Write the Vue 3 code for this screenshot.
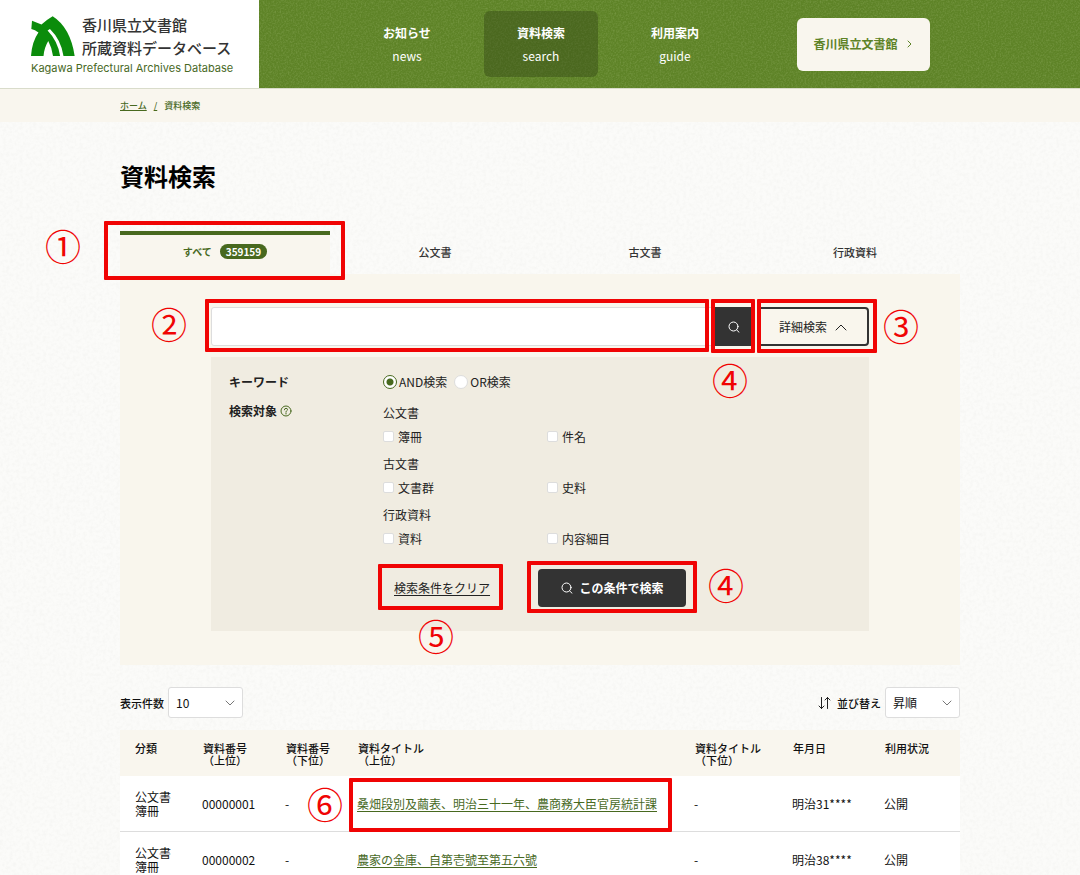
<script setup>
import { ref } from 'vue'

const navItems = [
  { ja: 'お知らせ', en: 'news', active: false },
  { ja: '資料検索', en: 'search', active: true },
  { ja: '利用案内', en: 'guide', active: false },
]

const tabs = [
  { label: 'すべて', count: '359159', active: true },
  { label: '公文書' },
  { label: '古文書' },
  { label: '行政資料' },
]

const groups = [
  { title: '公文書', options: ['簿冊', '件名'] },
  { title: '古文書', options: ['文書群', '史料'] },
  { title: '行政資料', options: ['資料', '内容細目'] },
]

const columns = [
  { key: 'kind', lines: ['分類'] },
  { key: 'upper', lines: ['資料番号', '（上位）'] },
  { key: 'lower', lines: ['資料番号', '（下位）'] },
  { key: 'title', lines: ['資料タイトル', '（上位）'] },
  { key: 'sub', lines: ['資料タイトル', '（下位）'] },
  { key: 'date', lines: ['年月日'] },
  { key: 'state', lines: ['利用状況'] },
]

const rows = [
  { id: '00000001', title: '桑畑段別及繭表、明治三十一年、農商務大臣官房統計課', date: '明治31****', note: '⑥' },
  { id: '00000002', title: '農家の金庫、自第壱號至第五六號', date: '明治38****' },
]

const keyword = ref('')
const mode = ref('and')
const perPage = ref('10')
const order = ref('asc')
</script>

<template>
  <div class="page">
    <svg class="grain" aria-hidden="true">
      <filter id="paper">
        <feTurbulence type="fractalNoise" baseFrequency="0.3" numOctaves="3" seed="4" />
        <feColorMatrix values="0 0 0 0 0.4  0 0 0 0 0.4  0 0 0 0 0.36  0.13 0 0 0 -0.05" />
      </filter>
      <rect width="100%" height="100%" filter="url(#paper)" />
    </svg>

    <header class="header">
      <svg class="grain" aria-hidden="true">
        <filter id="felt">
          <feTurbulence type="fractalNoise" baseFrequency="0.6" numOctaves="2" seed="9" />
          <feColorMatrix values="0 0 0 0 0.85  0 0 0 0 0.95  0 0 0 0 0.6  0.3 0 0 0 -0.12" />
        </filter>
        <rect width="100%" height="100%" filter="url(#felt)" />
      </svg>
      <a class="brand" href="#">
        <span class="brand-row">
          <svg class="logo" viewBox="95 48 130 118" aria-hidden="true">
            <path fill="#0b8c0b" d="M98 62 L126 73 Q142 59 159 49 Q211 82 224 166 L191 166 Q184 118 151 86 L144 91 Q174 122 181 166 L160 166 Q156 140 146 122 Q134 142 132 166 L95 166 Q98 124 117 97 Q107 88 96 86 Z" />
          </svg>
          <span class="brand-name">香川県立文書館<br />所蔵資料データベース</span>
        </span>
        <span class="brand-en">Kagawa Prefectural Archives Database</span>
      </a>
      <nav class="nav">
        <a v-for="n in navItems" :key="n.en" href="#" class="nav-item" :class="{ active: n.active }">
          <b>{{ n.ja }}</b><span>{{ n.en }}</span>
        </a>
      </nav>
      <a class="site-link" href="#">
        香川県立文書館
        <svg viewBox="0 0 8 8" aria-hidden="true"><path d="M2 1 L5 4 L2 7" /></svg>
      </a>
    </header>

    <div class="crumbs">
      <div class="container">
        <a href="#">ホーム</a><a class="slash" href="#">/</a><span>資料検索</span>
      </div>
    </div>

    <main class="container">
      <h1>資料検索</h1>

      <div class="tabs">
        <button v-for="t in tabs" :key="t.label" type="button" class="tab" :class="{ active: t.active }">
          {{ t.label }}<span v-if="t.count" class="badge">{{ t.count }}</span>
        </button>
        <div class="frame frame-tab"></div>
        <span class="num num-1">①</span>
      </div>

      <form class="search" @submit.prevent>
        <div class="search-row">
          <div class="cell cell-input">
            <input v-model="keyword" type="text" class="keyword" aria-label="キーワード" />
            <div class="frame frame-input"></div>
            <span class="num num-2">②</span>
          </div>
          <div class="cell">
            <button type="submit" class="go" aria-label="検索">
              <svg class="glass" viewBox="0 0 12 12" aria-hidden="true"><circle cx="5.5" cy="5.5" r="4.5" /><path d="M8.5 8.8 L11 11.2" /></svg>
            </button>
            <div class="frame frame-go"></div>
            <span class="num num-4">④</span>
          </div>
          <div class="cell cell-detail">
            <button type="button" class="detail">
              詳細検索
              <svg viewBox="0 0 12 8" aria-hidden="true"><path d="M1 7 L6 2 L11 7" /></svg>
            </button>
            <div class="frame frame-detail"></div>
            <span class="num num-3">③</span>
          </div>
        </div>

        <div class="conditions">
          <div class="cond-label">キーワード</div>
          <div class="radios">
            <label><input v-model="mode" type="radio" name="mode" value="and" />AND検索</label>
            <label><input v-model="mode" type="radio" name="mode" value="or" />OR検索</label>
          </div>
          <div class="cond-label">
            検索対象
            <svg class="help" viewBox="0 0 12 12" aria-hidden="true">
              <circle cx="6" cy="6" r="5" />
              <path d="M4.4 4.8 Q4.5 3.3 6 3.3 Q7.6 3.4 7.5 4.7 Q7.4 5.5 6.5 6 Q6 6.3 6 7.1 M6 8.2 V9" />
            </svg>
          </div>
          <div>
            <div v-for="g in groups" :key="g.title" class="group">
              <div class="group-title">{{ g.title }}</div>
              <div class="checks">
                <label v-for="o in g.options" :key="o"><input type="checkbox" />{{ o }}</label>
              </div>
            </div>
          </div>
          <div class="actions">
            <div class="cell">
              <button type="reset" class="clear">検索条件をクリア</button>
              <div class="frame frame-clear"></div>
              <span class="num num-5">⑤</span>
            </div>
            <div class="cell">
              <button type="submit" class="submit">
                <svg class="glass" viewBox="0 0 12 12" aria-hidden="true"><circle cx="5.5" cy="5.5" r="4.5" /><path d="M8.5 8.8 L11 11.2" /></svg>
                この条件で検索
              </button>
              <div class="frame frame-submit"></div>
              <span class="num num-4b">④</span>
            </div>
          </div>
        </div>
      </form>

      <div class="toolbar">
        <label for="per">表示件数</label>
        <span class="select">
          <select id="per" v-model="perPage"><option>10</option><option>20</option><option>50</option></select>
          <svg viewBox="0 0 10 8" aria-hidden="true"><path d="M1 2 L5 6 L9 2" /></svg>
        </span>
        <svg class="sort" viewBox="0 0 13 12" aria-hidden="true"><path d="M3.5 0.5 V11.5 M1 9 L3.5 11.5 M9.5 11.5 V0.5 M9.5 0.5 L12 3 M3.5 11.5 L6 9 M7 3 L9.5 0.5" /></svg>
        <label for="order">並び替え</label>
        <span class="select">
          <select id="order" v-model="order"><option value="asc">昇順</option><option value="desc">降順</option></select>
          <svg viewBox="0 0 10 8" aria-hidden="true"><path d="M1 2 L5 6 L9 2" /></svg>
        </span>
      </div>

      <table>
        <colgroup><col v-for="c in columns" :key="c.key" :class="'col-' + c.key" /></colgroup>
        <thead>
          <tr>
            <th v-for="c in columns" :key="c.key" scope="col">
              <template v-for="(l, i) in c.lines" :key="l"><br v-if="i" />{{ l }}</template>
            </th>
          </tr>
        </thead>
        <tbody>
          <tr v-for="r in rows" :key="r.id">
            <td>公文書<br />簿冊</td>
            <td>{{ r.id }}</td>
            <td>-</td>
            <td>
              <span class="cell title">
                <a href="#">{{ r.title }}</a>
                <template v-if="r.note">
                  <span class="frame frame-title"></span>
                  <span class="num num-6">{{ r.note }}</span>
                </template>
              </span>
            </td>
            <td>-</td>
            <td>{{ r.date }}</td>
            <td>公開</td>
          </tr>
        </tbody>
      </table>
    </main>
  </div>
</template>

<style>
body {
  background: #fafaf8;
}
</style>

<style scoped>
* {
  box-sizing: border-box;
}
.page {
  position: relative;
  height: 100vh;
  overflow: hidden;
  background: #fbfbf9;
  color: #111;
  font: 12px/16px "Noto Sans CJK JP", sans-serif;
}
button, input, select {
  font: inherit;
  color: inherit;
  margin: 0;
}
button {
  cursor: pointer;
  padding: 0;
}
svg path, svg circle {
  stroke-linecap: round;
  stroke-linejoin: round;
}
.grain {
  position: absolute;
  inset: 0;
  width: 100%;
  height: 100%;
}
.container {
  position: relative;
  width: calc(100% - 240px);
  max-width: 840px;
  margin: 0 auto;
}

/* header */
.header {
  position: relative;
  display: flex;
  align-items: center;
  height: 88px;
  background: #5e8327;
}
.brand {
  position: relative;
  width: 259px;
  height: 88px;
  padding: 13px 0 0 31px;
  background: #fff;
  text-decoration: none;
  color: #333;
}
.brand-row {
  display: flex;
  gap: 7px;
}
.logo {
  width: 44px;
  height: 40px;
  margin-top: 3px;
}
.brand-name {
  font-size: 15px;
  font-weight: 500;
  line-height: 23px;
  white-space: nowrap;
}
.brand-en {
  display: block;
  margin-top: 1px;
  font: 11px/16px Inter, sans-serif;
  color: #48691f;
  white-space: nowrap;
}
.nav {
  position: relative;
  display: flex;
  gap: 20px;
  margin-left: 91px;
}
.nav-item {
  display: flex;
  flex-direction: column;
  align-items: center;
  justify-content: center;
  gap: 7px;
  width: 114px;
  height: 66px;
  border-radius: 6px;
  color: #fff;
  text-decoration: none;
}
.nav-item.active {
  background: rgba(48, 64, 20, 0.4);
}
.site-link {
  position: relative;
  display: flex;
  align-items: center;
  justify-content: center;
  gap: 8px;
  width: 133px;
  height: 53px;
  margin-left: 65px;
  border-radius: 6px;
  background: #f9f6ee;
  color: #5e8327;
  font-weight: 700;
  text-decoration: none;
}
.site-link svg {
  width: 8px;
  height: 8px;
  fill: none;
  stroke: #5e8327;
}

/* breadcrumb */
.crumbs {
  position: relative;
  height: 34px;
  border-top: 1px solid #d9dccb;
  background: #f9f6ee;
  color: #48691f;
  font-size: 9px;
  font-weight: 500;
  line-height: 33px;
}
.crumbs a {
  color: inherit;
}
.crumbs .slash {
  margin: 0 7px;
}

/* title and tabs */
h1 {
  margin: 36px 0 38px;
  font-size: 24px;
  line-height: 35px;
  color: #000;
}
.tabs {
  position: relative;
  display: grid;
  grid-template-columns: repeat(4, 1fr);
  height: 43px;
}
.tab {
  padding-bottom: 6px;
  border: 0;
  border-top: 4px solid transparent;
  background: none;
  font-size: 11px;
  font-weight: 500;
  color: #333;
}
.tab.active {
  border-color: #48691f;
  background: #f9f6ee;
  color: #48691f;
  font-size: 10px;
  font-weight: 700;
}
.badge {
  display: inline-block;
  margin-left: 8px;
  padding: 0 6px;
  border-radius: 8px;
  background: #48691f;
  color: #fff;
  font-size: 10px;
  line-height: 15px;
}

/* search panel */
.search {
  padding: 33px 91px 34px;
  background: #f9f6ed;
}
.search-row {
  display: flex;
}
.cell {
  position: relative;
}
.cell-input {
  flex: 1;
}
.keyword {
  width: 100%;
  height: 39px;
  padding: 0 12px;
  border: 1px solid #ddd;
  border-radius: 3px 0 0 3px;
  background: #fff;
}
.go {
  display: flex;
  align-items: center;
  justify-content: center;
  width: 41px;
  height: 39px;
  border: 0;
  border-radius: 0 3px 3px 0;
  background: #333;
}
.glass {
  width: 12px;
  height: 12px;
  fill: none;
  stroke: #fff;
}
.cell-detail {
  margin-left: 3px;
}
.detail {
  display: flex;
  align-items: center;
  justify-content: center;
  gap: 8px;
  width: 112px;
  height: 39px;
  border: 2px solid #333;
  border-radius: 4px;
  background: #f9f6ed;
  color: #222;
}
.detail svg {
  width: 12px;
  height: 8px;
  fill: none;
  stroke: #222;
}
.conditions {
  display: grid;
  grid-template-columns: 154px 1fr;
  margin-top: 11px;
  padding: 15px 18px 24px;
  background: #f0ece1;
  color: #222;
}
.cond-label {
  display: flex;
  align-items: center;
  gap: 3px;
  height: 20px;
  font-weight: 700;
  line-height: 20px;
}
.conditions > .cond-label:nth-child(3) {
  margin-top: 9px;
}
.help {
  width: 12px;
  height: 12px;
  fill: none;
  stroke: #48691f;
}
.radios {
  display: flex;
  gap: 7px;
}
.radios label {
  display: flex;
  align-items: center;
  gap: 2px;
  height: 20px;
}
.radios input {
  appearance: none;
  width: 14px;
  height: 14px;
  border: 1px solid #ddd;
  border-radius: 50%;
  background: #fff;
}
.radios input:checked {
  border-color: #48691f;
  background: radial-gradient(circle, #48691f 3px, #fff 4px);
}
.group {
  padding-top: 11px;
  margin-bottom: -1px;
}
.group-title {
  line-height: 20px;
}
.checks {
  display: grid;
  grid-template-columns: 164px 1fr;
  padding-top: 6px;
}
.checks label {
  display: flex;
  align-items: center;
  gap: 4px;
  line-height: 15px;
}
.checks input {
  appearance: none;
  width: 11px;
  height: 11px;
  border: 1px solid #ddd;
  border-radius: 2px;
  background: #fff;
}
.actions {
  grid-column: 2;
  display: flex;
  align-items: center;
  gap: 48px;
  margin-top: 24px;
  padding-left: 11px;
}
.clear {
  border: 0;
  background: none;
  text-decoration: underline;
  text-underline-offset: 2px;
}
.submit {
  display: flex;
  align-items: center;
  justify-content: center;
  gap: 7px;
  width: 148px;
  height: 38px;
  border: 0;
  border-radius: 4px;
  background: #333;
  color: #fff;
  font-weight: 700;
}

/* list toolbar */
.toolbar {
  position: relative;
  display: flex;
  align-items: center;
  gap: 4px;
  padding: 22px 0 12px;
  font-size: 11px;
  font-weight: 500;
}
.select {
  position: relative;
  width: 75px;
  height: 31px;
}
.select select {
  appearance: none;
  width: 100%;
  height: 31px;
  padding: 0 7px;
  border: 1px solid #ddd;
  border-radius: 3px;
  background: #fff;
  font-size: 12px;
  font-weight: 400;
}
.select svg {
  position: absolute;
  right: 8px;
  top: 12px;
  width: 10px;
  height: 8px;
  fill: none;
  stroke: #777;
  pointer-events: none;
}
.sort {
  width: 13px;
  height: 12px;
  margin: 0 2px 0 auto;
  fill: none;
  stroke: #222;
}

/* results */
table {
  position: relative;
  width: 100%;
  border-collapse: collapse;
  table-layout: fixed;
  background: #fff;
}
.col-kind { width: 75px; }
.col-upper { width: 83px; }
.col-lower { width: 72px; }
.col-title { width: 337px; }
.col-sub { width: 98px; }
.col-date { width: 92px; }
.col-state { width: 83px; }
th {
  height: 46px;
  padding: 12px 0 0 8px;
  background: #f9f6ee;
  font-size: 11px;
  font-weight: 500;
  line-height: 12px;
  text-align: left;
  vertical-align: top;
  white-space: nowrap;
}
td {
  height: 55px;
  padding: 2px 0 0 7px;
  border-bottom: 1px solid #ddd;
  line-height: 14px;
  white-space: nowrap;
}
th:first-child, td:first-child {
  padding-left: 15px;
}
td a {
  color: #48691f;
  text-underline-offset: 2px;
}

/* guide marks laid over the page */
.frame {
  position: absolute;
  border: 4px solid #f00404;
  border-radius: 1px;
  pointer-events: none;
  z-index: 1;
}
.frame-tab { left: -16px; width: calc(25% + 31px); top: -10px; bottom: -6px; }
.frame-input { inset: -8px 4px -6px -6px; }
.frame-go { inset: -8px -1px -7px -2px; }
.frame-detail { inset: -8px -8px -7px 0; }
.frame-clear { inset: -16px -13px -14px -16px; }
.frame-submit { inset: -8px -11px -6px -11px; }
.frame-title { inset: -17px -15px -20px -8px; }
.num {
  position: absolute;
  width: 36px;
  color: #f00404;
  font-size: 36px;
  font-weight: 400;
  line-height: 36px;
  text-align: center;
  z-index: 1;
}
.num-1 { left: -75px; top: -4px; }
.num-2 { left: -60px; top: -2px; }
.num-3 { right: -50px; top: 0; }
.num-4 { left: -1px; top: 54px; }
.num-4b { right: -58px; top: -3px; }
.num-5 { left: 24px; top: 37px; }
.num-6 { left: -50px; top: -10px; }
</style>
